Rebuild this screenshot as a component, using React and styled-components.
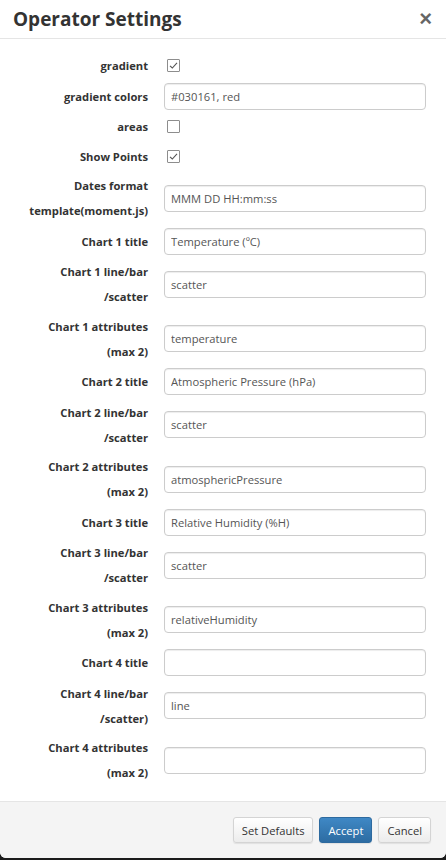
import React from "react";
import styled, { createGlobalStyle } from "styled-components";

const GlobalStyle = createGlobalStyle`
  html, body {
    margin: 0;
    padding: 0;
    background: #1b1b1b;
    font-family: "Open Sans", "Liberation Sans", sans-serif;
  }
`;

const Modal = styled.div`
  width: 446px;
  height: 858px;
  background: #fff;
  border-radius: 0 0 6px 6px;
  display: flex;
  flex-direction: column;
  overflow: hidden;
`;

const Header = styled.div`
  height: 38px;
  border-bottom: 1px solid #e5e5e5;
  display: flex;
  align-items: center;
  justify-content: space-between;
  padding: 0 14px 0 13px;
`;

const Title = styled.h4`
  margin: 0;
  font-size: 19px;
  font-weight: 700;
  color: #333;
  line-height: 1;
`;

const Close = styled.button`
  border: 0;
  background: none;
  padding: 0;
  font-family: "Liberation Sans", sans-serif;
  font-size: 22px;
  font-weight: 700;
  color: #000;
  opacity: 0.6;
  line-height: 1;
  cursor: pointer;
`;

const Body = styled.div`
  flex: 1;
  padding: 14px 20px 14px 0;
  display: flex;
  flex-direction: column;
  gap: 4.5px;
`;

const Row = styled.div`
  display: grid;
  grid-template-columns: 148px 1fr;
  column-gap: 16px;
  align-items: center;
  min-height: 25px;
`;

const Label = styled.label`
  text-align: right;
  font-size: 11.2px;
  font-weight: 700;
  color: #333;
  line-height: 25px;
  white-space: nowrap;
`;

const Input = styled.input`
  box-sizing: border-box;
  width: 100%;
  height: 27px;
  border: 1px solid #ccc;
  border-radius: 4px;
  padding: 0 6px;
  font-family: "Open Sans", "Liberation Sans", sans-serif;
  font-size: 11.2px;
  color: #555;
  box-shadow: inset 0 1px 1px rgba(0, 0, 0, 0.075);
  outline: none;
`;

const Box = styled.span`
  box-sizing: border-box;
  width: 13px;
  height: 13px;
  margin-left: 3px;
  border: 1px solid #8d8d8d;
  border-radius: 1px;
  background: #fff;
  display: flex;
  align-items: center;
  justify-content: center;
`;

const Footer = styled.div`
  height: 56px;
  border-top: 1px solid #e5e5e5;
  background: #f4f4f4;
  display: flex;
  align-items: center;
  justify-content: flex-end;
  gap: 6px;
  padding: 0 15px 0 0;
`;

const Button = styled.button`
  height: 26px;
  padding: 0 8px;
  border-radius: 3px;
  font-family: "Open Sans", "Liberation Sans", sans-serif;
  font-size: 11.2px;
  cursor: pointer;
  border: 1px solid ${(p) => (p.$primary ? "#2d6a9f" : "#d4d4d4")};
  color: ${(p) => (p.$primary ? "#fff" : "#333")};
  background: ${(p) =>
    p.$primary
      ? "linear-gradient(#3f88c5, #2d6ca2)"
      : "linear-gradient(#ffffff, #ececec)"};
  box-shadow: 0 1px 1px rgba(0, 0, 0, 0.08);
`;

const Checkbox = ({ checked }) => (
  <Box>
    {checked && (
      <svg width="9" height="9" viewBox="0 0 9 9">
        <polyline
          points="1,4.8 3.3,7 8,1.8"
          fill="none"
          stroke="#555"
          strokeWidth="1.1"
        />
      </svg>
    )}
  </Box>
);

const fields = [
  { label: ["gradient"], check: true },
  { label: ["gradient colors"], value: "#030161, red" },
  { label: ["areas"], check: false },
  { label: ["Show Points"], check: true },
  { label: ["Dates format", "template(moment.js)"], value: "MMM DD HH:mm:ss" },
  { label: ["Chart 1 title"], value: "Temperature (ºC)" },
  { label: ["Chart 1 line/bar", "/scatter"], value: "scatter" },
  { label: ["Chart 1 attributes", "(max 2)"], value: "temperature" },
  { label: ["Chart 2 title"], value: "Atmospheric Pressure (hPa)" },
  { label: ["Chart 2 line/bar", "/scatter"], value: "scatter" },
  { label: ["Chart 2 attributes", "(max 2)"], value: "atmosphericPressure" },
  { label: ["Chart 3 title"], value: "Relative Humidity (%H)" },
  { label: ["Chart 3 line/bar", "/scatter"], value: "scatter" },
  { label: ["Chart 3 attributes", "(max 2)"], value: "relativeHumidity" },
  { label: ["Chart 4 title"], value: "" },
  { label: ["Chart 4 line/bar", "/scatter)"], value: "line" },
  { label: ["Chart 4 attributes", "(max 2)"], value: "" },
];

export default function App() {
  return (
    <>
      <GlobalStyle />
      <Modal>
        <Header>
          <Title>Operator Settings</Title>
          <Close>×</Close>
        </Header>
        <Body>
          {fields.map((f, i) => (
            <Row key={i}>
              <Label>
                {f.label.map((l, j) => (
                  <div key={j}>{l}</div>
                ))}
              </Label>
              {"check" in f ? (
                <Checkbox checked={f.check} />
              ) : (
                <Input defaultValue={f.value} />
              )}
            </Row>
          ))}
        </Body>
        <Footer>
          <Button>Set Defaults</Button>
          <Button $primary>Accept</Button>
          <Button>Cancel</Button>
        </Footer>
      </Modal>
    </>
  );
}
